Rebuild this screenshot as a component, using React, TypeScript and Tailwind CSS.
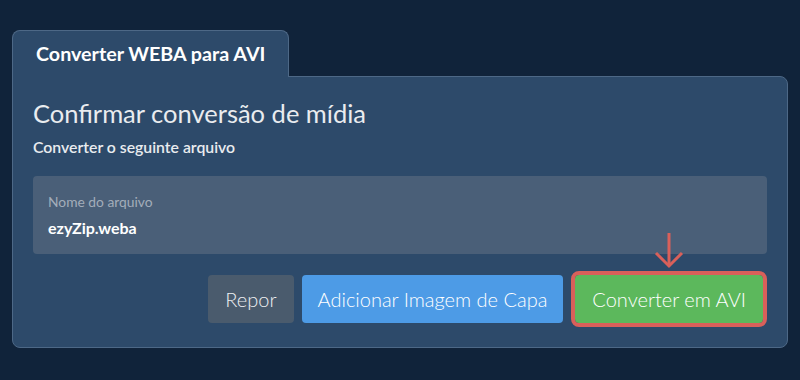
import React from "react";

export default function App() {
  return (
    <div
      className="w-[800px] h-[380px] bg-[#10233a] pt-[30px] px-[12px]"
      style={{ fontFamily: "Lato, 'Noto Sans', sans-serif" }}
    >
      <div className="flex">
        <div className="relative z-10 -mb-px h-[47px] flex items-center px-[23px] bg-[#2d4a6a] border border-b-0 border-[#4d6886] rounded-t-[8px] text-white text-[19.7px] font-bold">
          Converter WEBA para AVI
        </div>
      </div>
      <div className="bg-[#2d4a6a] border border-[#4d6886] rounded-b-[8px] rounded-tr-[8px] px-[20px] pt-[20px] pb-[24px]">
        <h1 className="text-[25.5px] leading-[32px] text-[#e9ecef] font-normal">
          Confirmar conversão de mídia
        </h1>
        <p className="mt-[8px] text-[15.8px] leading-[20px] text-[#e9ecef] font-semibold">
          Converter o seguinte arquivo
        </p>
        <div className="mt-[19px] h-[78px] bg-[#4a5f78] rounded-[4px] px-[15px] pt-[17px]">
          <div className="text-[13.8px] leading-[18px] text-[#a3adba]">Nome do arquivo</div>
          <div className="mt-[6px] text-[16px] leading-[22px] text-white font-bold">ezyZip.weba</div>
        </div>
        <div className="mt-[21px] flex justify-end items-end gap-[8px] relative">
          <button className="h-[48px] px-[17px] rounded-[4px] bg-[#4a5b6d] text-[#eef0f2] text-[20px] font-light">
            Repor
          </button>
          <button className="h-[48px] px-[16px] rounded-[4px] bg-[#4d9be6] text-white text-[20px] font-light">
            Adicionar Imagem de Capa
          </button>
          <div className="relative ml-[4px] mr-[4px]">
            <svg
              className="absolute left-1/2 -translate-x-1/2 -top-[43px]"
              width="30"
              height="37"
              viewBox="0 0 30 37"
              fill="none"
            >
              <path d="M15 1 V34" stroke="#d9605a" strokeWidth="3" />
              <path d="M2 21 L15 34 L28 21" stroke="#d9605a" strokeWidth="3" />
            </svg>
            <button className="h-[48px] px-[17px] bg-[#5cb85c] text-white text-[20px] font-light outline outline-[4px] outline-[#d9605a] rounded-[4px]">
              Converter em AVI
            </button>
          </div>
        </div>
      </div>
    </div>
  );
}
